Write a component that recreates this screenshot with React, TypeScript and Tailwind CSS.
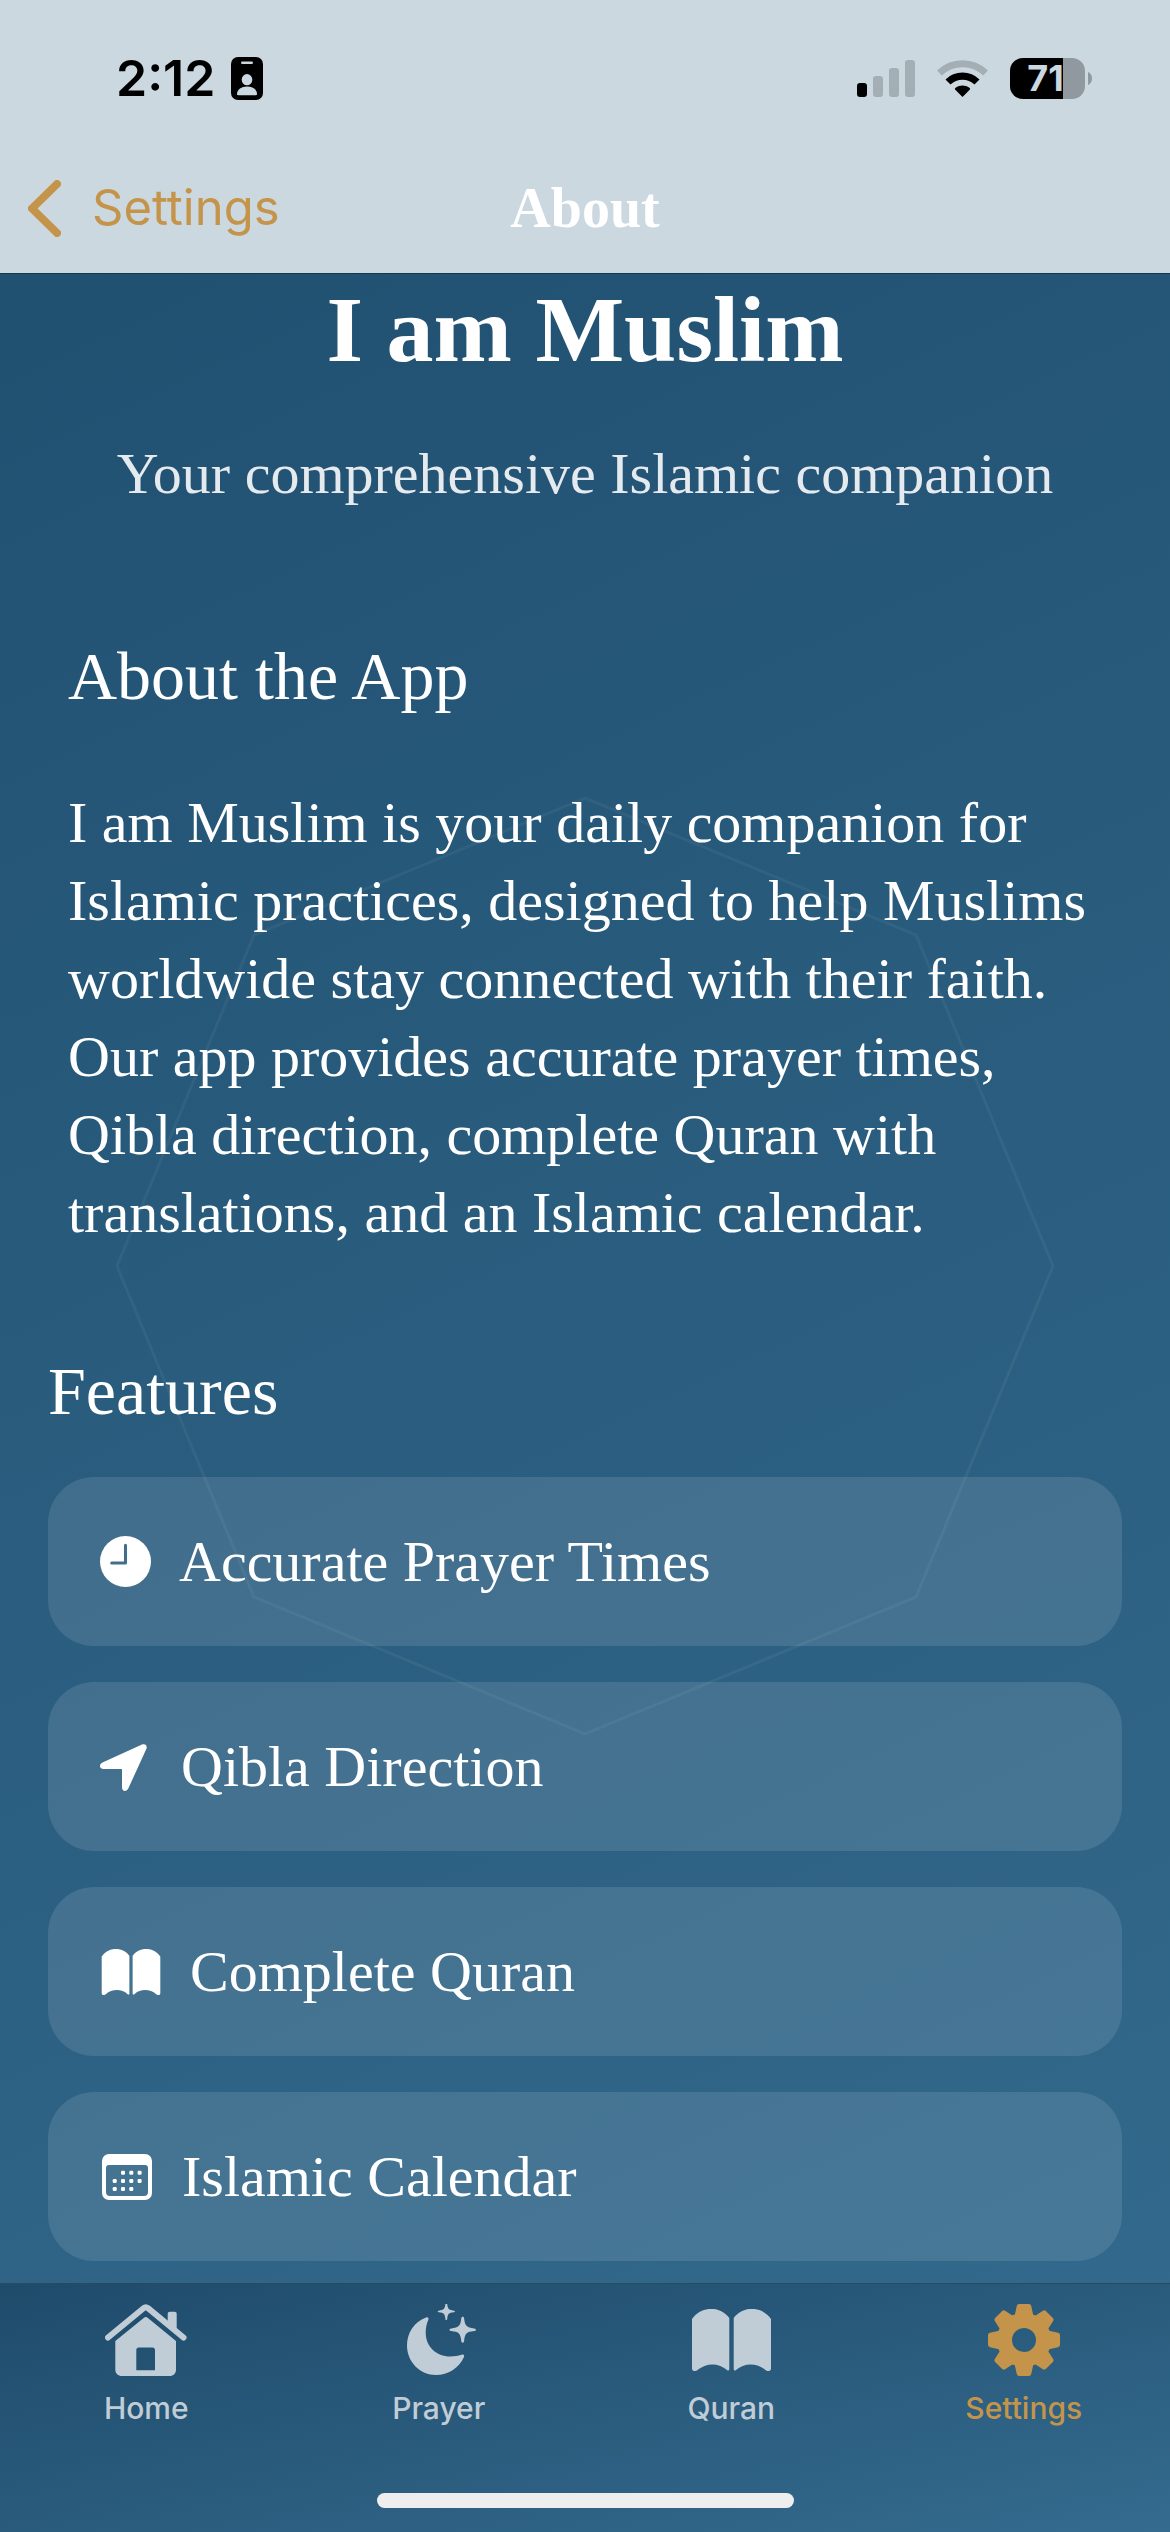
import type { ReactNode } from "react";

const SERIF = "font-['Liberation_Serif',serif]";

function BadgeIcon() {
  return (
    <svg viewBox="0 0 32 43" className="h-[43px] w-8" aria-hidden="true">
      <rect width="32" height="43" rx="7" fill="#000" />
      <g fill="#cbd8e0">
        <rect x="10" y="4.5" width="12" height="2.6" rx="1.3" />
        <ellipse cx="16" cy="22.7" rx="5.3" ry="5.6" />
        <path d="M6 37c0-4.500 4.500-7.500 10-7.500s10 3 10 7.500c0 .8-.5 1.200-1.200 1.200H7.200C6.500 38.200 6 37.800 6 37z" />
      </g>
    </svg>
  );
}

function SignalIcon() {
  return (
    <svg viewBox="0 0 58 37" className="h-[37px] w-[58px]" aria-hidden="true">
      <rect x="0" y="23" width="10" height="14" rx="3" fill="#000" />
      <g fill="#a3aeb5">
        <rect x="16" y="16" width="10" height="21" rx="3" />
        <rect x="32" y="8" width="10" height="29" rx="3" />
        <rect x="48" y="0" width="10" height="37" rx="3" />
      </g>
    </svg>
  );
}

function WifiIcon() {
  return (
    <svg viewBox="0 0 51 37" className="h-[37px] w-[51px]" aria-hidden="true">
      <path d="M2.400 13.100A33.300 33.300 0 0 1 48.600 13.100" fill="none" stroke="#a3aeb5" strokeWidth="7" />
      <path d="M11 22a20.800 20.800 0 0 1 29 0" fill="none" stroke="#000" strokeWidth="7.200" />
      <path d="M25.500 37l-7.200-7.300c-.6-.7-.5-1.500.3-2 4.200-3 9.600-3 13.800 0 .8.500.9 1.300.3 2z" fill="#000" />
    </svg>
  );
}

function Battery() {
  return (
    <div className="flex items-center gap-[3px]">
      <div className="relative flex h-[41px] w-[75px] items-center justify-center rounded-[13px] bg-[#9098a0]">
        <div className="absolute inset-y-0 left-0 w-[53px] rounded-l-[13px] bg-black" />
        <span className="relative pr-1 text-[36px] leading-[44px] font-bold text-[#cbd8e0]">71</span>
      </div>
      <svg viewBox="0 0 4 13" className="h-[13px] w-1" aria-hidden="true">
        <path d="M0 0c2.500 1 4 3.500 4 6.500S2.500 12 0 13z" fill="#9098a0" />
      </svg>
    </div>
  );
}

function ClockIcon() {
  return (
    <svg viewBox="0 0 50 50" className="h-[51px] w-[51px]" aria-hidden="true">
      <circle cx="25" cy="25" r="25" fill="#fff" />
      <path d="M25 9v17.500H11.500" fill="none" stroke="#426e8c" strokeWidth="3" strokeLinecap="round" strokeLinejoin="round" />
    </svg>
  );
}

function ArrowIcon() {
  return (
    <svg viewBox="0 -2 53 50" className="h-[50px] w-[53px]" aria-hidden="true">
      <path
        d="M42 .6 2.500 18.500C-1.500 20.500-.5 25 3.500 25H21c.8 0 1 .3 1 1v17.500c0 4 4.500 4.800 6.300 1L46.300 5C47.800 1.500 45-.8 42 .6z"
        fill="#fff"
      />
    </svg>
  );
}

const PAGE_PATH =
  "M0 10C9-3.200 28-3.500 37.300 9V60c0 1.500-1.300 2-2.300 1C27 53.500 14 53.500 5.500 61 3 63 0 62 0 59.500z";

function BookIcon({ className }: { className: string }) {
  return (
    <svg viewBox="0 0 79 62" className={className} fill="currentColor" aria-hidden="true">
      <path d={PAGE_PATH} />
      <path d={PAGE_PATH} transform="translate(79 0) scale(-1 1)" />
    </svg>
  );
}

const DOTS = [
  [21, 18.7], [29.3, 18.7], [37.6, 18.7],
  [12.7, 27], [21, 27], [29.3, 27], [37.6, 27],
  [12.7, 35], [21, 35], [29.3, 35],
];

function CalendarIcon() {
  return (
    <svg viewBox="-2 0 54 46" className="h-[46px] w-[54px]" fill="#fff" aria-hidden="true">
      <path
        fillRule="evenodd"
        d="M7 0H43a7 7 0 0 1 7 7V39a7 7 0 0 1-7 7H7a7 7 0 0 1-7-7V7A7 7 0 0 1 7 0zM7 11a3 3 0 0 0-3 3V38a4 4 0 0 0 4 4H42a4 4 0 0 0 4-4V14a3 3 0 0 0-3-3z"
      />
      {DOTS.map(([x, y]) => (
        <rect key={`${x}-${y}`} x={x - 2} y={y - 2} width="4" height="4" rx="1.200" />
      ))}
    </svg>
  );
}

function HomeIcon() {
  return (
    <svg viewBox="0 0 82 72" className="h-[72px] w-[82px]" fill="currentColor" aria-hidden="true">
      <path
        d="M3 33.500 38.500 4.200c1.500-1.200 3-1.200 4.500 0L78.500 33.500"
        fill="none"
        stroke="currentColor"
        strokeWidth="6"
        strokeLinecap="round"
        strokeLinejoin="round"
      />
      <path d="M62.700 18V10c0-1.500.8-2.300 2.300-2.300h4.400c1.500 0 2.300.8 2.300 2.300v16z" />
      <path
        fillRule="evenodd"
        d="M10.300 37 39 13.800c1.200-1 2.400-1 3.600 0L71 37V65.500c0 4-2.500 6.500-6.500 6.500H17c-4 0-6.700-2.500-6.700-6.500zM33.800 43.500c-1.500 0-2.500 1-2.500 2.500V66.300H50V46c0-1.500-1-2.500-2.500-2.500z"
      />
    </svg>
  );
}

function MoonIcon() {
  return (
    <svg viewBox="-6 1 75 72" className="h-[72px] w-[75px]" fill="currentColor" aria-hidden="true">
      <path d="M19 14.500C7 19 0 30 0 42.500 0 59 13 72 29 72c12 0 23-7 28-18 .6-2-.5-3-2.500-2.200-3.500 1.200-7 1.700-11 1.700-14.500 0-24.800-10-24.800-24 0-4.500.9-9 2.600-12.500.7-2-.3-3.200-2.300-2.500z" />
      <path
        transform="translate(39.300 8.500) scale(.65)"
        d="M0-13c.9 0 1.300.7 1.400 1.600C2.200-3.700 3.700-2.200 11.500-1.300c1 .1 1.700.5 1.700 1.300s-.7 1.200-1.700 1.300C3.700 2.200 2.200 3.700 1.400 11.400c-.1 1-.5 1.700-1.400 1.700s-1.300-.7-1.400-1.700C-2.200 3.700-3.700 2.200-11.500 1.300c-1-.1-1.700-.5-1.700-1.300s.7-1.200 1.700-1.300C-3.700-2.200-2.200-3.700-1.400-11.400c.1-.9.500-1.600 1.400-1.600z"
      />
      <path d="M55.700 13.700c.9 0 1.300.7 1.400 1.600.8 7.700 2.300 9.200 10.100 10.100 1 .1 1.700.5 1.700 1.300s-.7 1.200-1.700 1.300c-7.800.9-9.300 2.400-10.100 10.100-.1 1-.5 1.700-1.400 1.700s-1.300-.7-1.400-1.700c-.8-7.700-2.300-9.200-10.100-10.100-1-.1-1.700-.5-1.700-1.300s.7-1.200 1.700-1.300c7.800-.9 9.300-2.400 10.100-10.100.1-.9.500-1.600 1.400-1.600z" />
    </svg>
  );
}

const TEETH = [0, 45, 90, 135, 180, 225, 270, 315];

function GearIcon() {
  return (
    <svg viewBox="-36 -36 72 72" className="h-[72px] w-[72px]" fill="currentColor" stroke="currentColor" aria-hidden="true">
      <circle r="19.500" fill="none" strokeWidth="15" />
      {TEETH.map((a) => (
        <path key={a} d="M-7.500-21-4.800-33.500H4.800L7.500-21z" strokeWidth="5" strokeLinejoin="round" transform={`rotate(${a})`} />
      ))}
    </svg>
  );
}

function FeatureCard({ icon, label }: { icon: ReactNode; label: string }) {
  return (
    <li className="flex min-h-[169px] items-center gap-7 rounded-[46px] bg-white/11 px-13">
      {icon}
      <span className="text-[58px] leading-[78px]">{label}</span>
    </li>
  );
}

function Tab({ icon, label, active = false }: { icon: ReactNode; label: string; active?: boolean }) {
  return (
    <a
      href="#"
      aria-current={active ? "page" : undefined}
      className={`flex flex-col items-center gap-[14px] ${active ? "text-[#c5944b]" : "text-[#c0cdd7]"}`}
    >
      <span className="flex h-[72px] items-center">{icon}</span>
      <span className="text-[30px] leading-9 font-medium">{label}</span>
    </a>
  );
}

export default function App() {
  return (
    <div className="relative isolate flex min-h-screen flex-col overflow-hidden bg-[linear-gradient(155deg,#1f4e6e,#346b8e)] font-[Inter,sans-serif] text-white">
      <svg
        viewBox="0 0 936 936"
        className="absolute top-1/2 left-1/2 -z-10 w-4/5 -translate-x-1/2 -translate-y-1/2 overflow-visible"
        aria-hidden="true"
      >
        <path
          d="M468 0 799 137 936 468 799 799 468 936 137 799 0 468 137 137z"
          fill="none"
          stroke="#fff"
          strokeOpacity="0.05"
          strokeWidth="3"
        />
      </svg>

      <header className="border-b border-[#17364f] bg-[#cbd8e0] pt-12 pb-[35px]">
        <div className="flex h-15 items-center justify-between pr-[78px] pl-[116px] text-black">
          <div className="flex items-center gap-4">
            <span className="text-[50px] leading-[60px] font-semibold">2:12</span>
            <BadgeIcon />
          </div>
          <div className="flex items-center gap-[22px]">
            <SignalIcon />
            <WifiIcon />
            <Battery />
          </div>
        </div>
        <nav className="mt-[70px] grid grid-cols-[1fr_auto_1fr] items-center">
          <button type="button" className="flex items-center gap-[31px] justify-self-start pl-7 text-[#c5944b]">
            <svg viewBox="0 0 33 57" className="h-[57px] w-[33px]" fill="none" aria-hidden="true">
              <path d="M29 4 4 28.500 29 53" stroke="currentColor" strokeWidth="8" strokeLinecap="round" strokeLinejoin="round" />
            </svg>
            <span className="text-[49px] leading-[60px]">Settings</span>
          </button>
          <h1 className={`${SERIF} text-[56px] leading-[60px] font-bold`}>About</h1>
        </nav>
      </header>

      <main className={`${SERIF} flex-1 px-12 pt-[3px] pb-5`}>
        <h2 className="text-center text-[94px] leading-[104px] font-bold">I am Muslim</h2>
        <p className="mt-[54px] text-center text-[58px] leading-[78px] text-white/88">
          Your comprehensive Islamic companion
        </p>

        <section className="mt-[124px] px-5">
          <h3 className="text-[68px] leading-[78px]">About the App</h3>
          <p className="mt-[69px] text-[58px] leading-[78px]">
            I am Muslim is your daily companion for
            <br />
            Islamic practices, designed to help Muslims
            <br />
            worldwide stay connected with their faith.
            <br />
            Our app provides accurate prayer times,
            <br />
            Qibla direction, complete Quran with
            <br />
            translations, and an Islamic calendar.
          </p>
        </section>

        <section className="mt-[100px]">
          <h3 className="text-[68px] leading-[78px]">Features</h3>
          <ul className="mt-[47px] flex flex-col gap-9">
            <FeatureCard icon={<ClockIcon />} label="Accurate Prayer Times" />
            <FeatureCard icon={<ArrowIcon />} label="Qibla Direction" />
            <FeatureCard icon={<BookIcon className="h-[46px] w-[62px]" />} label="Complete Quran" />
            <FeatureCard icon={<CalendarIcon />} label="Islamic Calendar" />
          </ul>
        </section>
      </main>

      <footer className="border-t border-[#2a4a60] bg-[linear-gradient(to_bottom_right,#1f4b6b,#346b8e)] pt-5 pb-6">
        <nav className="grid grid-cols-4">
          <Tab icon={<HomeIcon />} label="Home" />
          <Tab icon={<MoonIcon />} label="Prayer" />
          <Tab icon={<BookIcon className="h-[62px] w-[79px]" />} label="Quran" />
          <Tab icon={<GearIcon />} label="Settings" active />
        </nav>
        <div className="mx-auto mt-[67px] h-[15px] w-[417px] rounded-full bg-[#eeeeee]" />
      </footer>
    </div>
  );
}
